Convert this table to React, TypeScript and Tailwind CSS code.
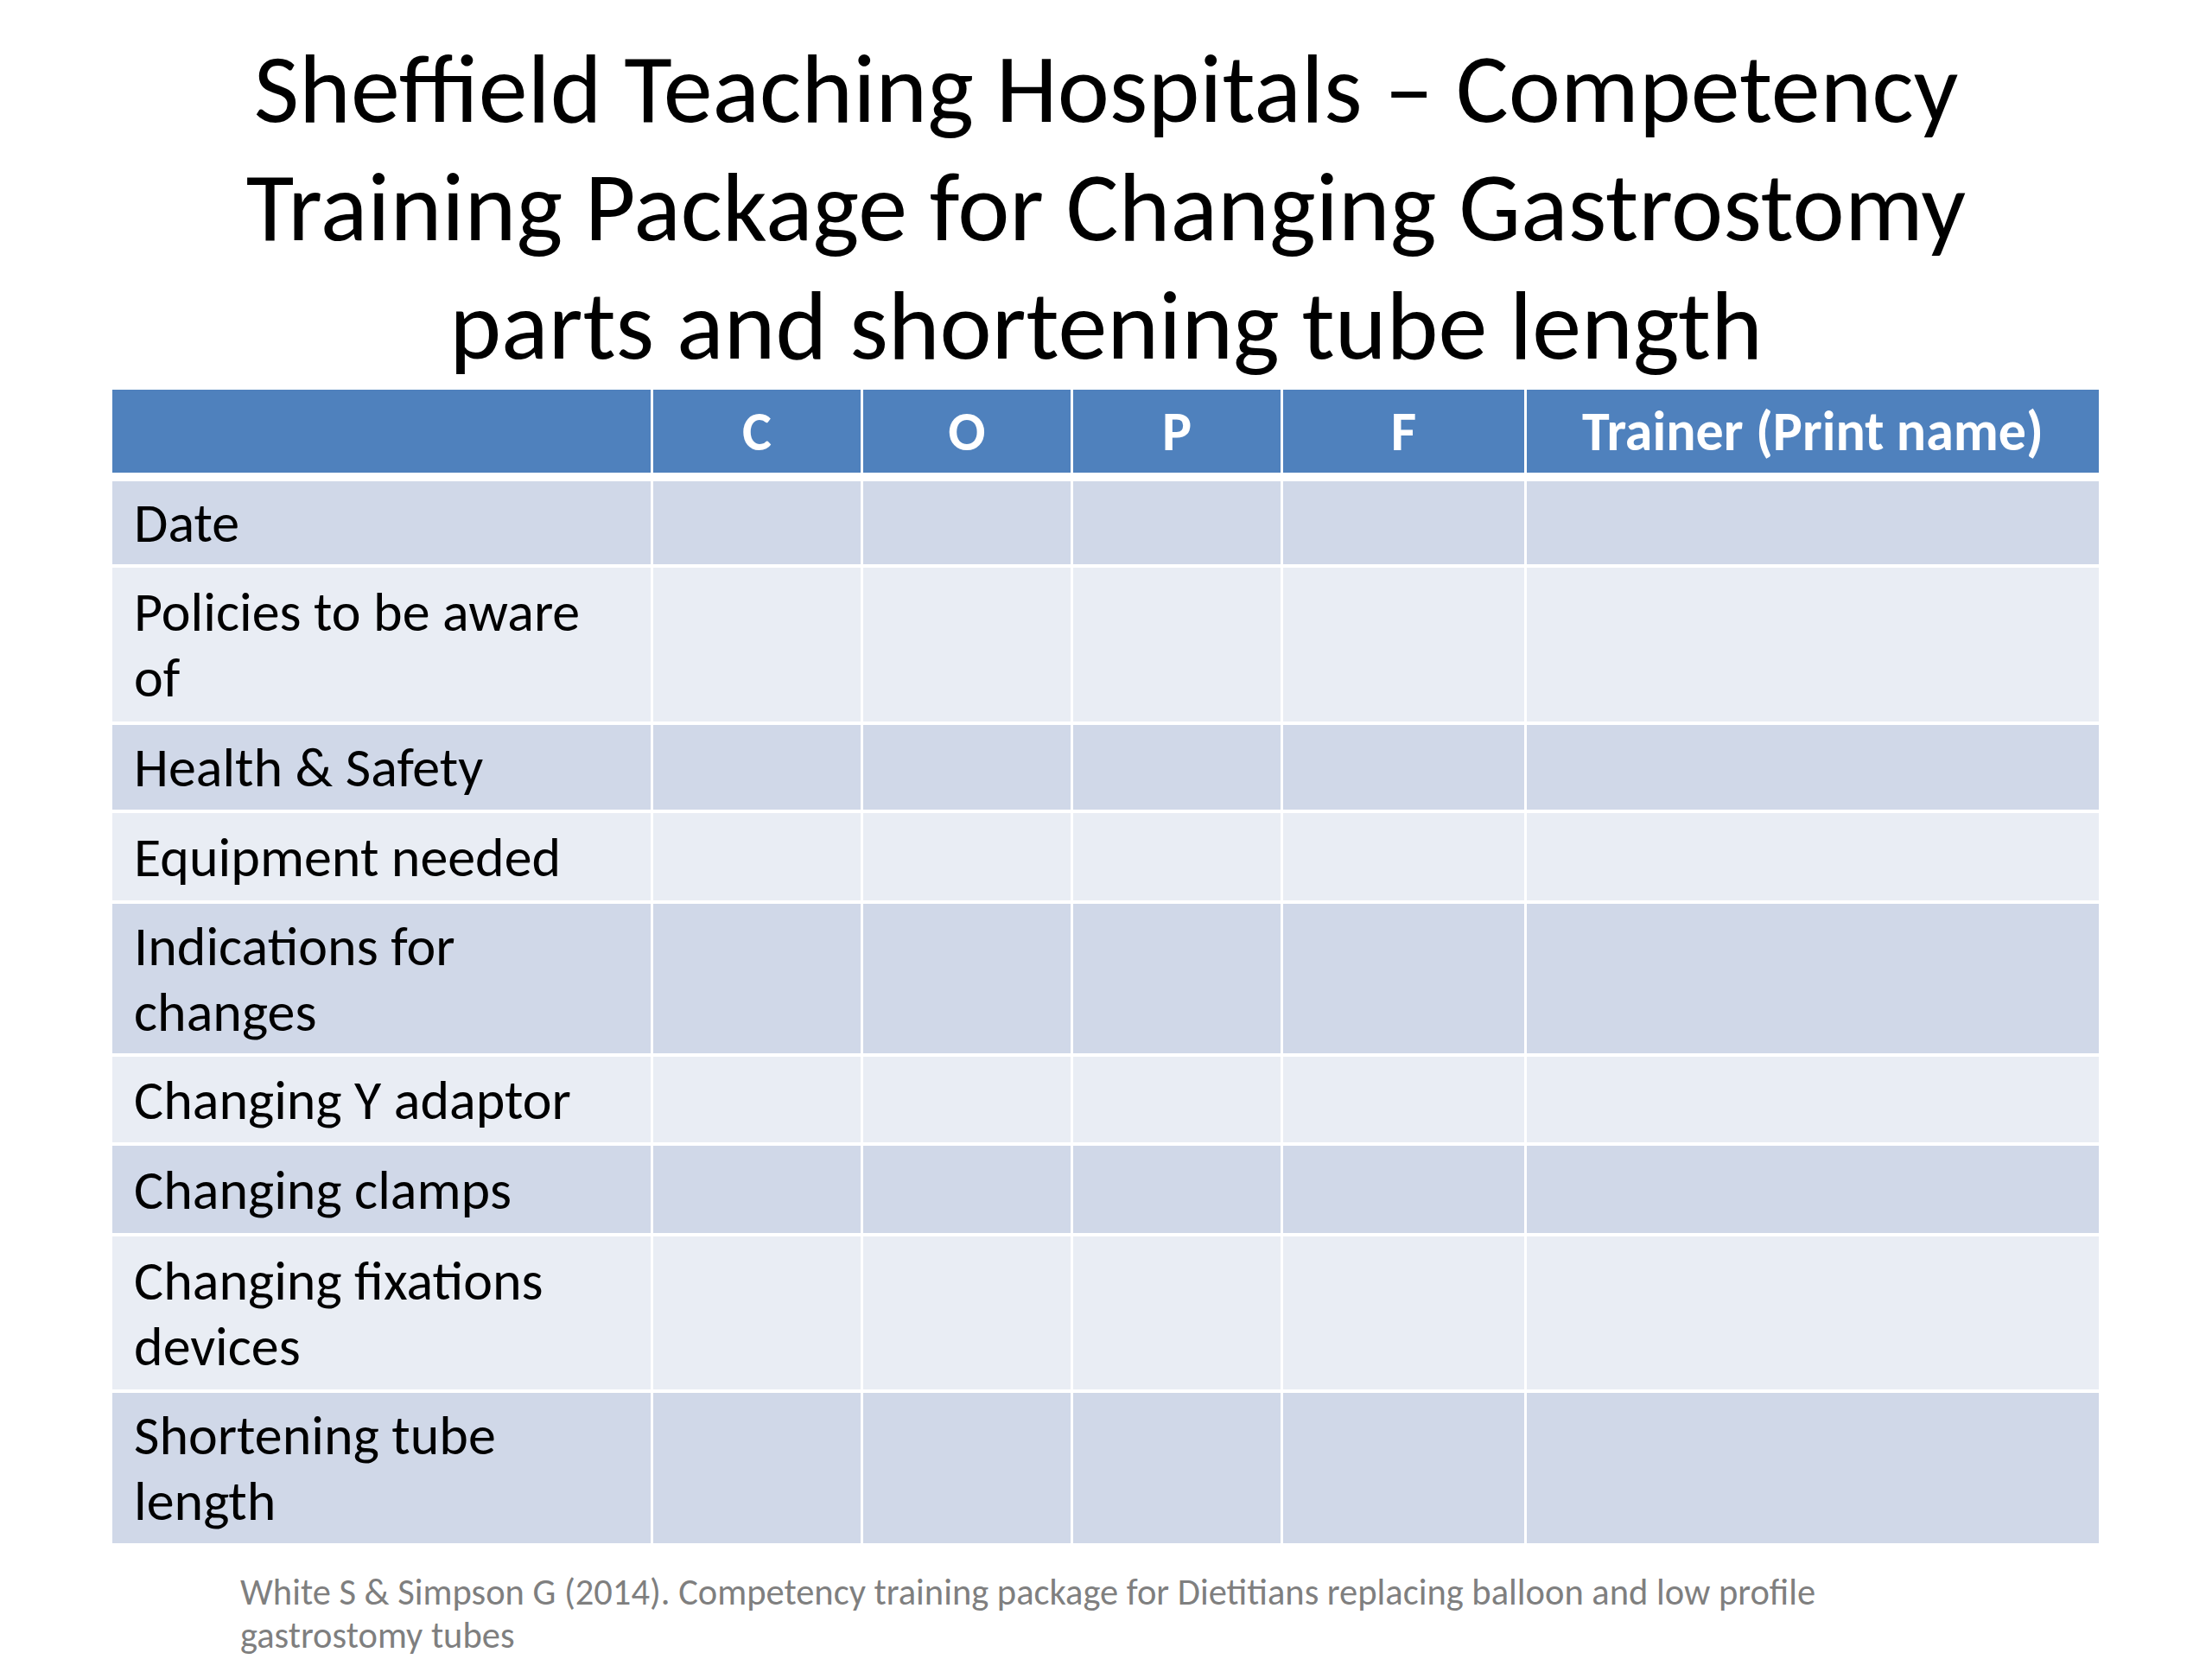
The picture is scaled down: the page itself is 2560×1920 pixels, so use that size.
import React from "react";

const rows: { label: string[]; h: string; shade: "dark" | "light" }[] = [
  { label: ["Date"], h: "h-[96px]", shade: "dark" },
  { label: ["Policies to be aware", "of"], h: "h-[178px]", shade: "light" },
  { label: ["Health & Safety"], h: "h-[98px]", shade: "dark" },
  { label: ["Equipment needed"], h: "h-[101px]", shade: "light" },
  { label: ["Indications for", "changes"], h: "h-[173px]", shade: "dark" },
  { label: ["Changing Y adaptor"], h: "h-[99px]", shade: "light" },
  { label: ["Changing clamps"], h: "h-[101px]", shade: "dark" },
  { label: ["Changing fixations", "devices"], h: "h-[177px]", shade: "light" },
  { label: ["Shortening tube", "length"], h: "h-[174px]", shade: "dark" },
];

const cols = "grid grid-cols-[623px_240px_240px_240px_279px_662px] gap-x-[3px]";

const App = () => {
  return (
    <div
      className="w-[2560px] h-[1920px] bg-white overflow-hidden"
      style={{ fontFamily: "Carlito, Lato, 'Liberation Sans', sans-serif" }}
    >
      {/* title */}
      <h1 className="pt-[34px] text-center text-black text-[114px] leading-[137px] font-normal">
        Sheffield Teaching Hospitals – Competency
        <br />
        Training Package for Changing Gastrostomy
        <br />
        parts and shortening tube length
      </h1>

      {/* table */}
      <div className="ml-[130px] mt-[6px] w-[2299px] flex flex-col">
        <div className={`${cols} h-[96px] mb-[10px]`}>
          <div className="bg-[#4f81bd]" />
          {["C", "O", "P", "F", "Trainer (Print name)"].map((t) => (
            <div
              key={t}
              className="bg-[#4f81bd] flex items-center justify-center text-white font-bold text-[64px] leading-[76px]"
            >
              {t}
            </div>
          ))}
        </div>

        <div className="flex flex-col gap-y-[4px]">
          {rows.map((r, i) => {
            const bg = r.shade === "dark" ? "bg-[#d0d8e8]" : "bg-[#e9edf4]";
            return (
              <div key={i} className={`${cols} ${r.h}`}>
                <div className={`${bg} flex flex-col justify-center pl-[25px] text-black text-[64px] leading-[76px]`}>
                  {r.label.map((l) => (
                    <span key={l}>{l}</span>
                  ))}
                </div>
                <div className={bg} />
                <div className={bg} />
                <div className={bg} />
                <div className={bg} />
                <div className={bg} />
              </div>
            );
          })}
        </div>
      </div>

      {/* reference */}
      <p className="ml-[278px] mt-[32px] w-[1900px] text-[#7f7f7f] text-[42.5px] leading-[50px]">
        White S &amp; Simpson G (2014). Competency training package for Dietitians replacing balloon and low profile
        gastrostomy tubes
      </p>
    </div>
  );
};

export default App;
